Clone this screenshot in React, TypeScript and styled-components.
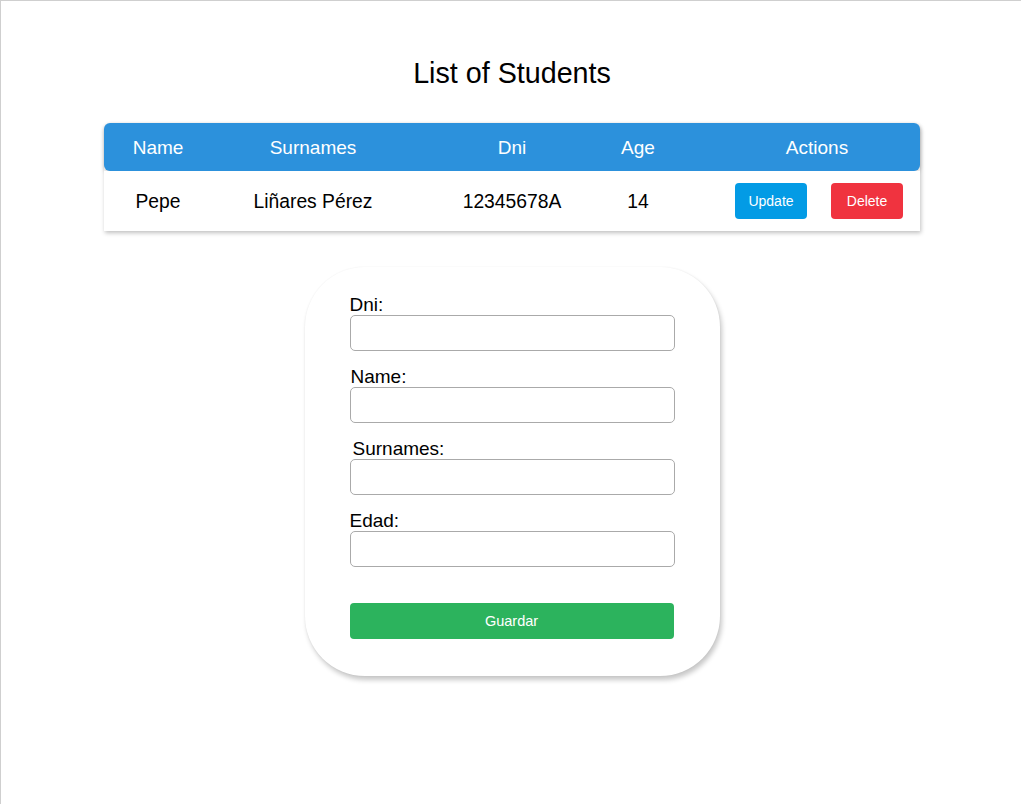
import React from "react";
import styled, { createGlobalStyle } from "styled-components";

const Global = createGlobalStyle`
  html, body { margin: 0; padding: 0; background: #fff; }
  body {
    font-family: "Liberation Sans", Arial, sans-serif;
    border-top: 1px solid #cfcfcf;
    border-left: 1px solid #cfcfcf;
    min-height: 100vh;
    box-sizing: border-box;
  }
`;

const Page = styled.div`
  padding: 0 0 40px 2px;
  display: flex;
  flex-direction: column;
  align-items: center;
`;

const Title = styled.h1`
  margin: 57px 0 34px;
  font-size: 28.7px;
  line-height: 31px;
  font-weight: 400;
  color: #000;
`;

const Table = styled.div`
  width: 816px;
  border-radius: 6px 6px 0 0;
  box-shadow: 1px 2px 4px rgba(0, 0, 0, 0.25);
  background: #fff;
`;

const Row = styled.div<{ $head?: boolean }>`
  display: grid;
  grid-template-columns: 108px 202px 196px 56px 1fr;
  align-items: center;
  box-sizing: border-box;
  padding-top: 2px;
  height: ${(p) => (p.$head ? "48px" : "60px")};
  background: ${(p) => (p.$head ? "#2c91dc" : "#fff")};
  color: ${(p) => (p.$head ? "#fff" : "#000")};
  border-radius: ${(p) => (p.$head ? "6px" : "0")};
  box-shadow: ${(p) => (p.$head ? "0 2px 4px rgba(0,0,0,0.2)" : "none")};
  font-size: ${(p) => (p.$head ? "19px" : "19.3px")};
  position: relative;
`;

const Cell = styled.div<{ $actions?: boolean; $pad?: number }>`
  text-align: center;
  padding-left: ${(p) => p.$pad ?? 0}px;
  display: ${(p) => (p.$actions ? "flex" : "block")};
  justify-content: center;
  gap: 24px;
  margin-top: ${(p) => (p.$actions ? "-2px" : "0")};
`;

const ActionButton = styled.button<{ $color: string }>`
  width: 72px;
  height: 36px;
  border: none;
  border-radius: 4px;
  background: ${(p) => p.$color};
  color: #fff;
  font-family: "Liberation Sans", Arial, sans-serif;
  font-size: 14px;
  padding: 0;
`;

const Card = styled.form`
  margin-top: 36px;
  width: 415px;
  box-sizing: border-box;
  padding: 27px 45px 37px;
  border-radius: 60px;
  background: #fff;
  box-shadow: 2px 4px 5px rgba(0, 0, 0, 0.22), 0 0 2px rgba(0, 0, 0, 0.06);
  display: flex;
  flex-direction: column;
`;

const Field = styled.div`
  display: flex;
  flex-direction: column;
  margin-bottom: 15px;
`;

const Label = styled.label<{ $shift?: number }>`
  font-size: 19px;
  line-height: 21px;
  color: #000;
  padding-left: ${(p) => p.$shift ?? 0}px;
`;

const Input = styled.input`
  height: 36px;
  width: 325px;
  box-sizing: border-box;
  border: 1px solid #aaa;
  border-radius: 5px;
  background: #fff;
  margin: 0;
`;

const Submit = styled.button`
  margin-top: 21px;
  width: 324px;
  height: 36px;
  border: none;
  border-radius: 4px;
  background: #2cb35d;
  color: #fff;
  font-family: "Liberation Sans", Arial, sans-serif;
  font-size: 14.5px;
`;

const fields = [
  { label: "Dni:", shift: 0 },
  { label: "Name:", shift: 1 },
  { label: "Surnames:", shift: 3 },
  { label: "Edad:", shift: 0 },
];

export default function App() {
  return (
    <>
      <Global />
      <Page>
        <Title>List of Students</Title>
        <Table>
          <Row $head>
            <Cell>Name</Cell>
            <Cell>Surnames</Cell>
            <Cell>Dni</Cell>
            <Cell>Age</Cell>
            <Cell $pad={48}>Actions</Cell>
          </Row>
          <Row>
            <Cell>Pepe</Cell>
            <Cell>Liñares Pérez</Cell>
            <Cell>12345678A</Cell>
            <Cell>14</Cell>
            <Cell $actions $pad={52}>
              <ActionButton type="button" $color="#039be5">Update</ActionButton>
              <ActionButton type="button" $color="#f0333f">Delete</ActionButton>
            </Cell>
          </Row>
        </Table>
        <Card onSubmit={(e) => e.preventDefault()}>
          {fields.map((f) => (
            <Field key={f.label}>
              <Label $shift={f.shift}>{f.label}</Label>
              <Input type="text" />
            </Field>
          ))}
          <Submit type="submit">Guardar</Submit>
        </Card>
      </Page>
    </>
  );
}
